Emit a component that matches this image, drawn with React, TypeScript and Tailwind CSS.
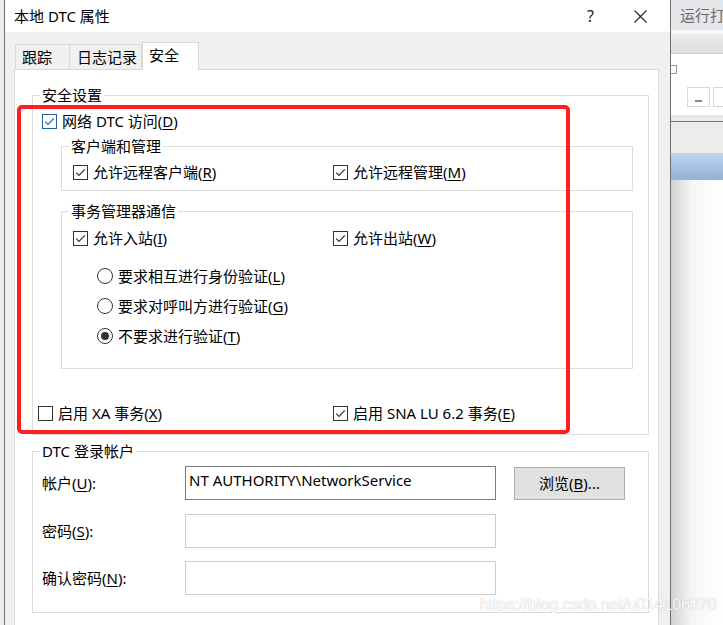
import React from 'react';

const FONT = "font-['Noto_Sans','Noto_Sans_CJK_SC',sans-serif]";

const Check = ({ checked, blue }: { checked?: boolean; blue?: boolean }) => (
  <span
    className={`w-[15px] h-[15px] shrink-0 border flex items-center justify-center bg-white ${
      blue ? 'border-[#2a62a0]' : 'border-[#333333]'
    }`}
  >
    {checked && (
      <svg width="13" height="13" viewBox="0 0 13 13">
        <path d="M2.2 6.6 L5 9.4 L10.8 3.4" fill="none" stroke={blue ? '#2a62a0' : '#333333'} strokeWidth="1.2" />
      </svg>
    )}
  </span>
);

const Radio = ({ on }: { on?: boolean }) => (
  <span className="w-[16px] h-[16px] shrink-0 rounded-full border border-[#333333] bg-white flex items-center justify-center">
    {on && <span className="w-[8px] h-[8px] rounded-full bg-[#333333]" />}
  </span>
);

const Key = ({ children }: { children: React.ReactNode }) => (
  <u className="underline underline-offset-[2px] decoration-1">{children}</u>
);

const CheckRow = ({
  checked,
  blue,
  children,
  className = '',
}: {
  checked?: boolean;
  blue?: boolean;
  children: React.ReactNode;
  className?: string;
}) => (
  <div className={`flex items-center h-[20px] gap-[5px] ${className}`}>
    <Check checked={checked} blue={blue} />
    <span className="whitespace-nowrap">{children}</span>
  </div>
);

const RadioRow = ({ on, children, className = '' }: { on?: boolean; children: React.ReactNode; className?: string }) => (
  <div className={`flex items-center h-[20px] gap-[5px] ${className}`}>
    <Radio on={on} />
    <span className="whitespace-nowrap">{children}</span>
  </div>
);

const RightStrip = () => (
  <div className="w-[52px] shrink-0 flex flex-col bg-white overflow-hidden">
    <div className="h-[30px] bg-[#e4e6e9] flex items-center pl-[9px] text-[15px] text-[#6b6b6b] whitespace-nowrap">
      运行打开
    </div>
    <div className="h-[4px] bg-[#f7f7f7]" />
    <div className="h-[20px] bg-gradient-to-b from-[#eaebed] to-[#dedfe1] border-b border-[#c9c9c9]" />
    <div className="h-[61px] bg-white relative">
      <div className="absolute left-[-4px] top-[11px] w-[10px] h-[9px] border border-[#9a9a9a]" />
      <div className="absolute left-[-2px] top-[32px] h-[21px] border-l border-[#d4d4d4]" />
      <div className="absolute left-[16px] top-[33px] w-[23px] h-[20px] border border-[#d8d8d8] flex items-end justify-center pb-[4px]">
        <span className="w-[7px] h-[2px] bg-[#8a8a8a]" />
      </div>
      <div className="absolute left-[42px] top-[33px] w-[20px] h-[20px] border border-[#d8d8d8]" />
    </div>
    <div className="h-[3px] bg-[#e6e6e6]" />
    <div className="h-[4px] bg-[#ececec] border-b border-[#777777]" />
    <div className="h-[32px] bg-[#ececec] border-b border-[#cfcfcf]" />
    <div className="h-[26px] bg-gradient-to-b from-[#bcd4ec] to-[#93b2d6]" />
    <div className="flex-1 bg-gradient-to-r from-[#d2d2d2] via-[#f6f6f6] via-40% to-white" />
  </div>
);

export default function App() {
  return (
    <div className={`relative w-[723px] h-[625px] overflow-hidden flex bg-[#eeeeee] text-[15px] leading-[20px] text-black ${FONT}`}>
      {/* background app, left sliver */}
      <div className="w-[4px] shrink-0 bg-[#ececec]" />

      {/* dialog */}
      <div className="w-[667px] shrink-0 flex flex-col border-x border-[#6f6f6f] bg-[#f0f0f0]">
        <div className="h-[32px] shrink-0 bg-white flex items-center pl-[9px]">
          <span className="text-[15px]">本地 DTC 属性</span>
          <span className="ml-auto mr-[40px] text-[16px] text-[#222]">?</span>
          <svg width="13" height="13" viewBox="0 0 13 13" className="mr-[23px]">
            <path d="M0.5 0.5 L12.5 12.5 M12.5 0.5 L0.5 12.5" stroke="#222" strokeWidth="1.1" />
          </svg>
        </div>

        <div className="pt-[10px] pl-[9px]">
          {/* tabs */}
          <div className="flex items-end h-[27px] pl-[1px]">
            <div className="w-[55px] h-[25px] border-x border-t border-[#d9d9d9] pl-[6px] leading-[24px]">跟踪</div>
            <div className="w-[72px] h-[25px] border-r border-t border-[#d9d9d9] pl-[7px] leading-[24px]">日志记录</div>
            <div className="relative z-10 -mb-px w-[57px] h-[28px] border-x border-t border-[#d9d9d9] bg-white pl-[6px] leading-[25px]">
              安全
            </div>
          </div>

          {/* panel */}
          <div className="w-[645px] h-[560px] border border-[#d9d9d9] bg-white pl-[17px] pr-[9px] pt-[15px]">
            <fieldset className="w-[617px] border border-[#dcdcdc] pl-[9px] pb-[11px]">
              <legend className="ml-[-2px] px-[2px] leading-[20px]">安全设置</legend>
              <CheckRow checked blue className="mt-[6px]">
                网络 DTC 访问(<Key>D</Key>)
              </CheckRow>

              <fieldset className="ml-[19px] mt-[5px] w-[572px] border border-[#dcdcdc] pl-[11px] pb-[8px]">
                <legend className="ml-[-4px] px-[2px] leading-[20px]">客户端和管理</legend>
                <div className="flex mt-[6px]">
                  <CheckRow checked className="w-[260px]">
                    允许远程客户端(<Key>R</Key>)
                  </CheckRow>
                  <CheckRow checked>
                    允许远程管理(<Key>M</Key>)
                  </CheckRow>
                </div>
              </fieldset>

              <fieldset className="ml-[19px] mt-[10px] w-[572px] border border-[#dcdcdc] pl-[11px] pb-[22px]">
                <legend className="ml-[-4px] px-[2px] leading-[20px]">事务管理器通信</legend>
                <div className="flex mt-[7px]">
                  <CheckRow checked className="w-[260px]">
                    允许入站(<Key>I</Key>)
                  </CheckRow>
                  <CheckRow checked>
                    允许出站(<Key>W</Key>)
                  </CheckRow>
                </div>
                <div className="pl-[24px] mt-[18px] flex flex-col gap-[10px]">
                  <RadioRow>
                    要求相互进行身份验证(<Key>L</Key>)
                  </RadioRow>
                  <RadioRow>
                    要求对呼叫方进行验证(<Key>G</Key>)
                  </RadioRow>
                  <RadioRow on>
                    不要求进行验证(<Key>T</Key>)
                  </RadioRow>
                </div>
              </fieldset>

              <div className="flex mt-[34px] ml-[-4px]">
                <CheckRow className="w-[295px]">
                  启用 XA 事务(<Key>X</Key>)
                </CheckRow>
                <CheckRow checked>
                  启用 SNA LU 6.2 事务(<Key>E</Key>)
                </CheckRow>
              </div>
            </fieldset>

            <fieldset className="mt-[6px] w-[617px] border border-[#dcdcdc] pl-[9px] pb-[17px]">
              <legend className="ml-[-2px] px-[2px] leading-[20px]">DTC 登录帐户</legend>
              <div className="flex items-center mt-[5px]">
                <span className="w-[143px]">
                  帐户(<Key>U</Key>):
                </span>
                <div className="w-[311px] h-[34px] border border-[#7a7a7a] pl-[3px] pt-[3px] whitespace-nowrap">
                  NT AUTHORITY\NetworkService
                </div>
                <button className="ml-[18px] w-[111px] h-[33px] border border-[#adadad] bg-[#e1e1e1] text-[15px]">
                  浏览(<Key>B</Key>)...
                </button>
              </div>
              <div className="flex items-center mt-[14px]">
                <span className="w-[143px]">
                  密码(<Key>S</Key>):
                </span>
                <div className="w-[311px] h-[34px] border border-[#cccccc]" />
              </div>
              <div className="flex items-center mt-[13px]">
                <span className="w-[143px]">
                  确认密码(<Key>N</Key>):
                </span>
                <div className="w-[311px] h-[34px] border border-[#cccccc]" />
              </div>
            </fieldset>
          </div>
        </div>
      </div>

      <RightStrip />

      {/* red annotation box */}
      <div className="absolute left-[17px] top-[105px] w-[553px] h-[329px] border-[4px] border-[#fe2020] rounded-[5px] pointer-events-none" />

      {/* watermark */}
      <div className="absolute left-[480px] top-[595px] text-[16px] leading-[20px] text-white font-['Liberation_Sans',Arial,sans-serif] [text-shadow:0_0_1px_rgba(0,0,0,0.35)] whitespace-nowrap">
        https://blog.csdn.net/u014106970
      </div>
    </div>
  );
}
